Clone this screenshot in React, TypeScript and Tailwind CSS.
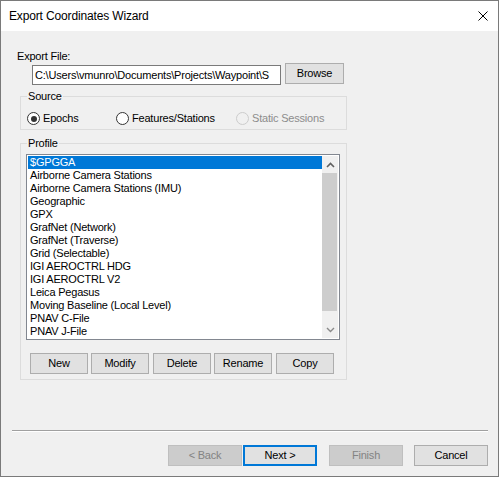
const profiles = [
  "$GPGGA",
  "Airborne Camera Stations",
  "Airborne Camera Stations (IMU)",
  "Geographic",
  "GPX",
  "GrafNet (Network)",
  "GrafNet (Traverse)",
  "Grid (Selectable)",
  "IGI AEROCTRL HDG",
  "IGI AEROCTRL V2",
  "Leica Pegasus",
  "Moving Baseline (Local Level)",
  "PNAV C-File",
  "PNAV J-File",
];

function Radio({ label, checked, disabled }: { label: string; checked?: boolean; disabled?: boolean }) {
  return (
    <div className="flex items-center h-[13px]">
      <span
        className={`w-[13px] h-[13px] rounded-full border flex items-center justify-center shrink-0 ${
          disabled ? "border-[#cccccc] bg-[#f0f0f0]" : "border-[#333333] bg-white"
        }`}
      >
        {checked && <span className="w-[6px] h-[6px] rounded-full bg-[#333333]" />}
      </span>
      <span className={`ml-[3px] leading-[13px] ${disabled ? "text-[#8d8d8d]" : ""}`}>{label}</span>
    </div>
  );
}

function Btn({
  label,
  className = "",
  disabled,
  isDefault,
}: {
  label: string;
  className?: string;
  disabled?: boolean;
  isDefault?: boolean;
}) {
  return (
    <div
      className={`h-[21px] flex items-center justify-center shrink-0 ${
        disabled
          ? "bg-[#cccccc] border border-[#bfbfbf] text-[#838383]"
          : isDefault
          ? "bg-[#e1e1e1] border-2 border-[#0078d7]"
          : "bg-[#e1e1e1] border border-[#adadad]"
      } ${className}`}
    >
      {label}
    </div>
  );
}

export default function App() {
  return (
    <div className="w-[499px] h-[477px] border border-[#7a7a7a] bg-[#f0f0f0] flex flex-col text-[11px] tracking-[-0.2px] text-black font-['Liberation_Sans',Arial,sans-serif] overflow-hidden">
      {/* title bar */}
      <div className="h-[30px] bg-white flex items-center pl-[8px] shrink-0">
        <span className="text-[12px] tracking-[-0.15px]">Export Coordinates Wizard</span>
        <svg className="ml-auto mr-[10px]" width="10" height="10" viewBox="0 0 10 10">
          <path d="M0.5 0.5 L9.5 9.5 M9.5 0.5 L0.5 9.5" stroke="#000" strokeWidth="1" />
        </svg>
      </div>

      <div className="flex flex-col">
        <div className="mt-[19px] ml-[16px] leading-[13px] h-[13px]">Export File:</div>

        <div className="flex items-start">
          <div className="mt-[2px] ml-[31px] w-[249px] h-[20px] border border-[#7a7a7a] bg-white pl-[2px] overflow-hidden whitespace-nowrap leading-[18px]">
            C:\Users\vmunro\Documents\Projects\Waypoint\S
          </div>
          <Btn label="Browse" className="ml-[4px] w-[59px]" />
        </div>

        {/* Source */}
        <fieldset className="mt-[5px] ml-[19px] w-[327px] h-[40px] border border-[#dcdcdc] box-border">
          <legend className="ml-[6px] px-[1px] leading-[13px]">Source</legend>
          <div className="flex mt-[9px] ml-[6px]">
            <div className="w-[89px]">
              <Radio label="Epochs" checked />
            </div>
            <div className="w-[120px]">
              <Radio label="Features/Stations" />
            </div>
            <Radio label="Static Sessions" disabled />
          </div>
        </fieldset>

        {/* Profile */}
        <fieldset className="mt-[7px] ml-[19px] w-[327px] h-[243px] border border-[#dcdcdc] box-border">
          <legend className="ml-[6px] px-[1px] leading-[13px]">Profile</legend>
          <div className="mt-[4px] ml-[5px] w-[314px] h-[186px] border border-[#828790] bg-white p-[1px] flex">
            <div className="w-[294px] flex flex-col">
              {profiles.map((p, i) => (
                <div
                  key={p}
                  className={`h-[13px] leading-[13px] pl-[2px] whitespace-nowrap ${
                    i === 0 ? "bg-[#0078d7] text-white" : ""
                  }`}
                >
                  {p}
                </div>
              ))}
            </div>
            <div className="w-[16px] h-[182px] bg-[#f0f0f0] flex flex-col">
              <div className="h-[17px] flex items-center justify-center">
                <svg width="9" height="6" viewBox="0 0 9 6">
                  <path d="M1 5 L4.5 1.5 L8 5" stroke="#606060" strokeWidth="1.6" fill="none" />
                </svg>
              </div>
              <div className="h-[138px] w-[15px] bg-[#cdcdcd]" />
              <div className="flex-1" />
              <div className="h-[17px] flex items-center justify-center">
                <svg width="9" height="6" viewBox="0 0 9 6">
                  <path d="M1 1 L4.5 4.5 L8 1" stroke="#8a8a8a" strokeWidth="1.4" fill="none" />
                </svg>
              </div>
            </div>
          </div>
          <div className="flex mt-[13px] ml-[9px]">
            <Btn label="New" className="w-[58px]" />
            <Btn label="Modify" className="ml-[3px] w-[58px]" />
            <Btn label="Delete" className="ml-[4px] w-[58px]" />
            <Btn label="Rename" className="ml-[3px] w-[58px]" />
            <Btn label="Copy" className="ml-[4px] w-[58px]" />
          </div>
        </fieldset>

        <div className="mt-[50px] ml-[11px] w-[476px] border-t border-b border-t-[#a0a0a0] border-b-white" />

        <div className="flex mt-[13px] ml-[167px]">
          <Btn label="< Back" className="w-[74px]" disabled />
          <Btn label="Next >" className="ml-[1px] w-[74px]" isDefault />
          <Btn label="Finish" className="ml-[12px] w-[74px]" disabled />
          <Btn label="Cancel" className="ml-[11px] w-[74px]" />
        </div>
      </div>
    </div>
  );
}
